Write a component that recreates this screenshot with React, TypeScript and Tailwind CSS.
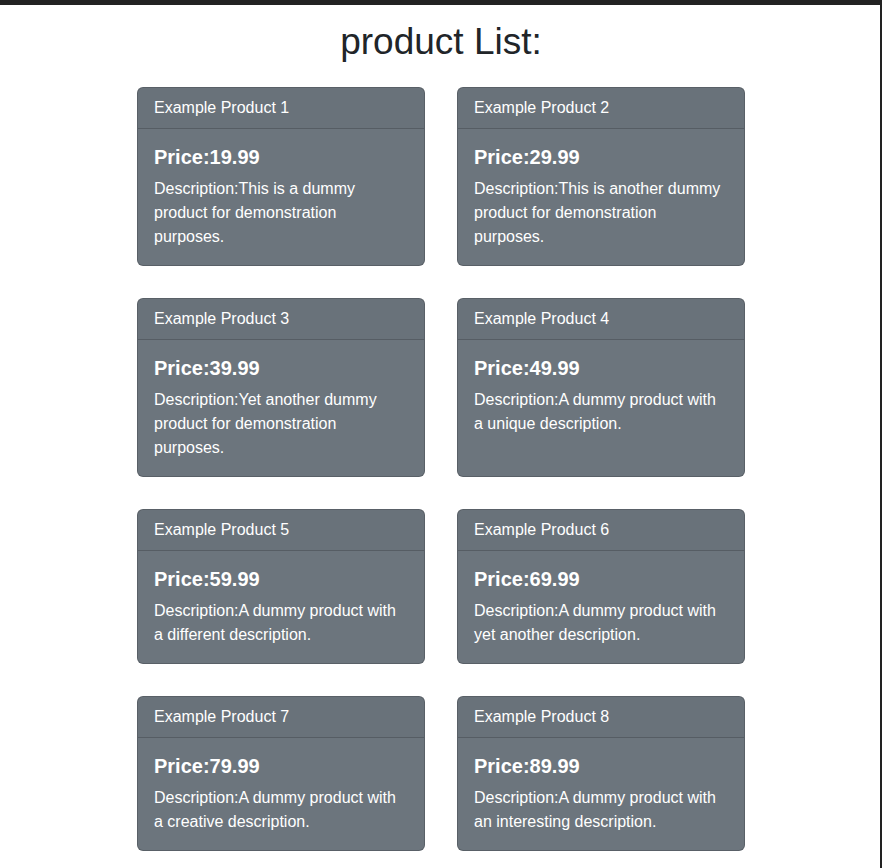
const products = [
  { name: "Example Product 1", price: "19.99", description: "This is a dummy product for demonstration purposes." },
  { name: "Example Product 2", price: "29.99", description: "This is another dummy product for demonstration purposes." },
  { name: "Example Product 3", price: "39.99", description: "Yet another dummy product for demonstration purposes." },
  { name: "Example Product 4", price: "49.99", description: "A dummy product with a unique description." },
  { name: "Example Product 5", price: "59.99", description: "A dummy product with a different description." },
  { name: "Example Product 6", price: "69.99", description: "A dummy product with yet another description." },
  { name: "Example Product 7", price: "79.99", description: "A dummy product with a creative description." },
  { name: "Example Product 8", price: "89.99", description: "A dummy product with an interesting description." },
];

const App = () => {
  return (
    <div
      className="min-h-screen bg-white border-t-[5px] border-r-2 border-[#222222] text-[#212529] pl-[2px] pb-[18px]"
      style={{ fontFamily: '"Liberation Sans", Arial, sans-serif' }}
    >
      {/* 제목 */}
      <h1 className="pt-4 text-center text-[37px] leading-[42px] font-normal mb-6">product List:</h1>

      {/* 상품 카드 */}
      <div className="w-[608px] mx-auto grid grid-cols-2 gap-8">
        {products.map((p) => (
          <div
            key={p.name}
            className="bg-[#6c757d] text-white rounded-[6px] border border-black/[0.175] flex flex-col"
          >
            <div className="px-4 py-2 text-base leading-6 border-b border-black/[0.175] bg-[#212529]/[0.03]">
              {p.name}
            </div>
            <div className="p-4">
              <h5 className="text-[20px] leading-6 font-semibold mb-2">Price:{p.price}</h5>
              <p className="text-base leading-6">Description:{p.description}</p>
            </div>
          </div>
        ))}
      </div>
    </div>
  );
};

export default App;
